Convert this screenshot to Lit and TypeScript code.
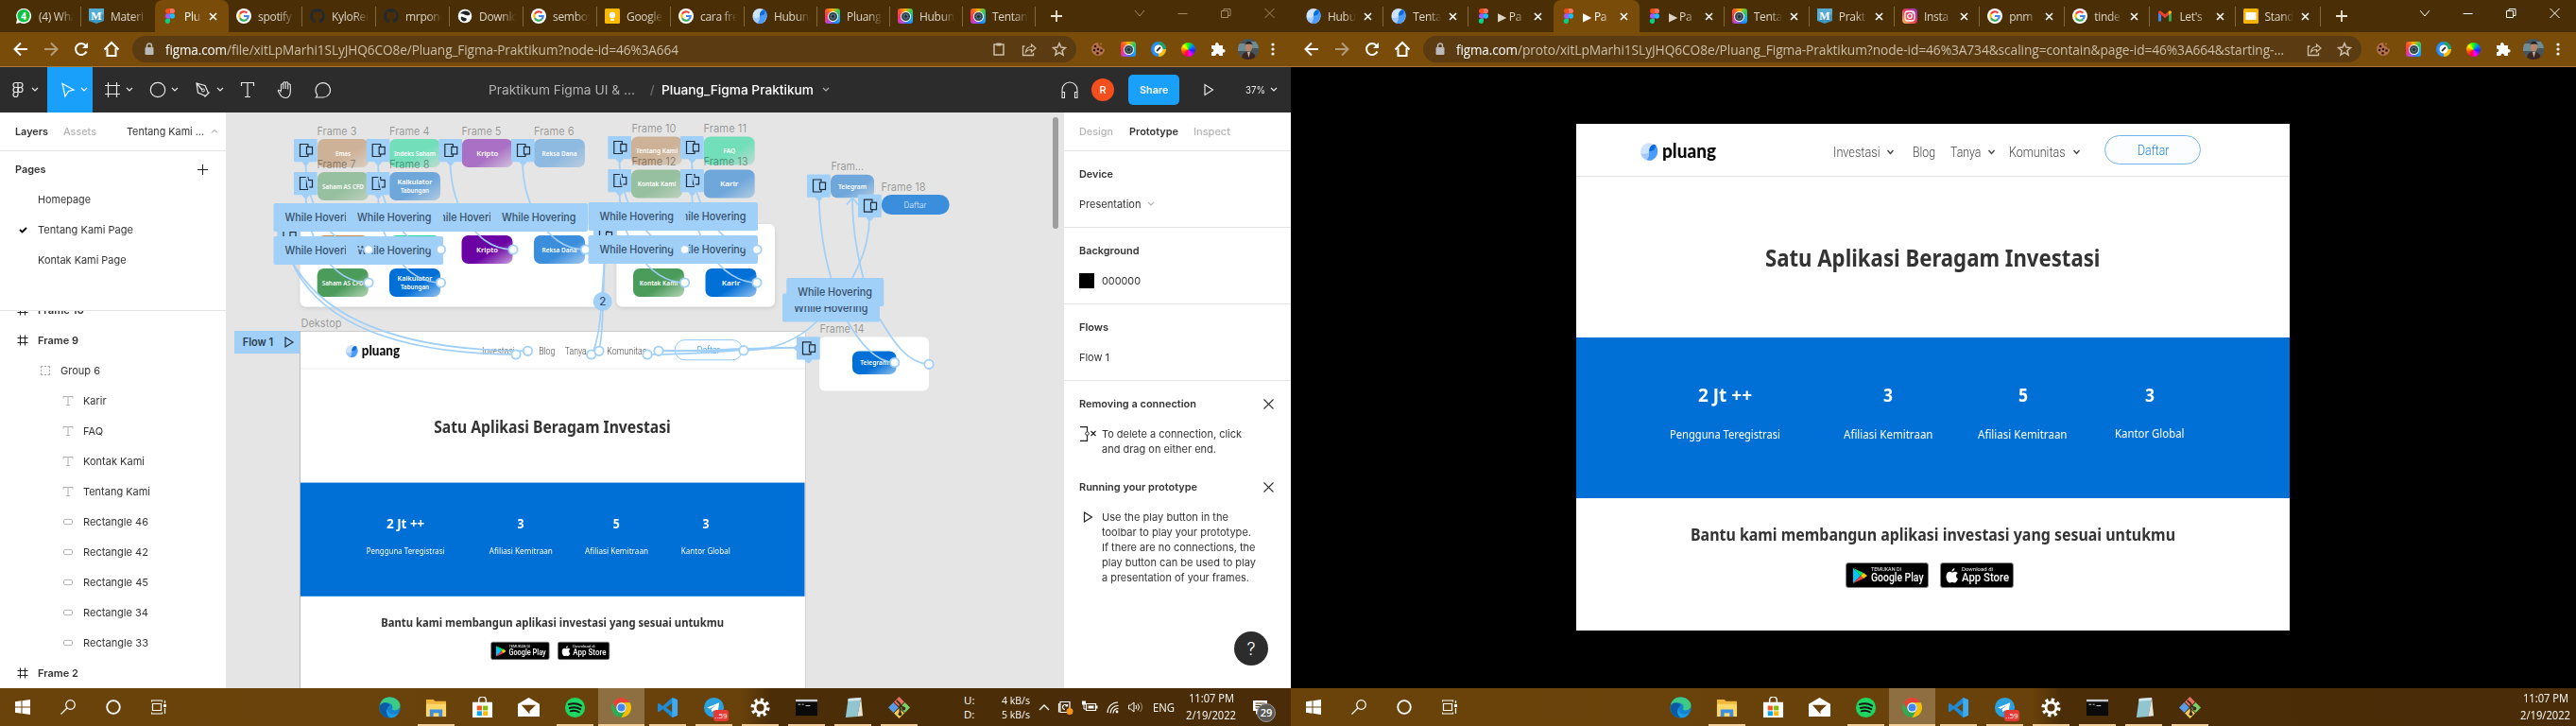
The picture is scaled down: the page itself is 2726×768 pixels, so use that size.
import { LitElement, html, svg, css, nothing } from "lit";
import { customElement, property } from "lit/decorators.js";
import { classMap } from "lit/directives/class-map.js";

/* ---------- text squeezed to a known width ---------- */
@customElement("fit-text")
class FitText extends LitElement {
  static styles = css`
    :host { display: inline-block; white-space: nowrap; }
    .t { display: inline-block; transform-origin: 0 50%; white-space: pre; }
  `;
  @property() t = "";
  @property({ type: Number }) w = 0;
  render() { return html`<span class="t">${this.t}</span>`; }
  updated() {
    const s = this.renderRoot.querySelector(".t") as HTMLElement;
    const n = s.getBoundingClientRect().width;
    const k = this.offsetWidth ? this.getBoundingClientRect().width / this.offsetWidth : 1;
    const nat = k > 0.9 && k < 1.1 ? n : s.offsetWidth;
    if (nat && this.w) {
      s.style.transform = `scaleX(${this.w / nat})`;
      this.style.width = `${this.w}px`;
    }
  }
}

const fit = (t: string, w: number, cls = "") => html`<fit-text class=${cls} .t=${t} .w=${w}></fit-text>`;
const ico = (w: number, h: number, vb: string, body: unknown) =>
  html`<svg width=${w} height=${h} viewBox=${vb} fill="none" style="display:block;flex:none">${body}</svg>`;

/* ---------- favicons and brand marks ---------- */
const fav: Record<string, () => unknown> = {
  whatsapp: () => ico(18, 18, "0 0 18 18", svg`<path d="M1 17l1-4.4A8 8 0 1 1 5.400 16z" fill="#fff"/><circle cx="9" cy="8.800" r="6.700" fill="#0fc143"/><text x="9" y="12.600" font-size="10" font-weight="700" text-anchor="middle" fill="#fff" font-family="Open Sans, sans-serif">4</text>`),
  materi: () => ico(16, 16, "0 0 16 16", svg`<path d="M0 0h16v13l-8 3-8-3z" fill="#3f97bd"/><path d="M0 0h16v6L0 13z" fill="#56abd0"/><text x="8" y="11.500" font-size="12" font-weight="700" text-anchor="middle" fill="#fff" font-family="Liberation Serif, serif">M</text>`),
  figma: () => ico(16, 16, "0 0 16 16", svg`<path d="M5.700 0H8v5.300H5.700a2.650 2.650 0 0 1 0-5.300z" fill="#f24e1e"/><path d="M8 0h2.300a2.650 2.650 0 0 1 0 5.300H8z" fill="#ff7262"/><path d="M5.700 5.300H8v5.400H5.700a2.700 2.700 0 0 1 0-5.400z" fill="#a259ff"/><circle cx="10.300" cy="8" r="2.700" fill="#1abcfe"/><path d="M5.700 10.700H8v2.600a2.650 2.650 0 1 1-2.300-2.600z" fill="#0acf83"/>`),
  google: () => ico(16, 16, "0 0 16 16", svg`<circle cx="8" cy="8" r="8" fill="#fff"/><g stroke-width="2.200"><path d="M3.900 5.700A4.700 4.700 0 0 1 11.400 4.700" stroke="#ea4335"/><path d="M3.900 5.700a4.700 4.700 0 0 0 0 4.600" stroke="#fbbc05"/><path d="M3.900 10.300a4.700 4.700 0 0 0 7.300 1.200" stroke="#34a853"/><path d="M8 8h4.700a4.700 4.700 0 0 1-1.500 3.500" stroke="#4285f4"/></g>`),
  github: () => ico(16, 16, "0 0 16 16", svg`<path fill="#24292e" d="M8 0C3.600 0 0 3.600 0 8c0 3.500 2.300 6.500 5.500 7.600.4.100.5-.2.500-.4v-1.400c-2.200.5-2.700-1-2.700-1-.4-.9-.9-1.200-.9-1.200-.7-.5.100-.5.100-.5.800.1 1.200.8 1.200.8.700 1.300 1.900.9 2.300.7.100-.5.300-.9.500-1.100-1.800-.2-3.600-.9-3.600-4 0-.9.300-1.600.8-2.100-.1-.2-.4-1 .1-2.100 0 0 .7-.2 2.200.8a7.500 7.500 0 0 1 4 0c1.500-1 2.200-.8 2.200-.8.4 1.100.2 1.900.1 2.100.5.600.8 1.300.8 2.100 0 3.100-1.900 3.700-3.700 3.900.3.300.6.800.6 1.500v2.200c0 .2.100.5.600.4A8 8 0 0 0 8 0z"/>`),
  globe: () => ico(16, 16, "0 0 16 16", svg`<circle cx="8" cy="8" r="7.300" fill="#fff"/><path d="M8.500 2.500c2.500 0 4.500 1.500 5 3.500-1 2-3 1-4.500 1s-2-1.200-3-1.200S3.500 5 3 5.500 5 2.500 8.500 2.500zM4 8.500c2 0 2.500 1.500 4.500 1.500s1.500 3.500-1 3.500S3 11 4 8.500z" fill="#222"/>`),
  keep: () => ico(16, 16, "0 0 16 16", svg`<rect width="16" height="16" rx="1.500" fill="#ffba00"/><circle cx="8" cy="7" r="3.200" fill="#fff"/><path d="M6.300 10.800h3.400v2H6.300z" fill="#fff"/>`),
  pluang: () => ico(16, 16, "0 0 18 18", svg`<ellipse cx="9" cy="9" rx="8.500" ry="9" fill="#cfe3fd"/><path d="M9 8.500c0-4 3-7.500 6.500-6.500 3 4 3 12-3.500 15.500-2 1-4.500.5-6-.5C9 15 8.500 12 9 8.500z" fill="#4b9bfa"/><path d="M9 8.500C9 4 11.500 1 15 1.800c1.500 3-1 7.200-6 6.700z" fill="#0a6bdc"/><path d="M.6 10.500C3 12 6.500 11.500 8.800 9 9 13 8 15 6 17 3 16 1 13.500.600 10.500z" fill="#a3c9fb"/>`),
  camera: () => html`<div class="cam">${ico(11, 11, "0 0 11 11", svg`<circle cx="5.500" cy="5.500" r="5.500" fill="#fff"/><circle cx="5.500" cy="5.500" r="4.600" fill="#37474f"/><circle cx="5.500" cy="5.500" r="2.200" fill="#22303a" stroke="#607d8b"/>`)}</div>`,
  insta: () => ico(16, 16, "0 0 16 16", svg`<defs><linearGradient id="ig" x1="0" y1="1" x2="1" y2="0"><stop offset="0" stop-color="#fdc04e"/><stop offset=".5" stop-color="#e93a5d"/><stop offset="1" stop-color="#8a3ac8"/></linearGradient></defs><rect width="16" height="16" rx="4" fill="url(#ig)"/><g stroke="#fff" stroke-width="1.300"><rect x="3" y="3" width="10" height="10" rx="3"/><circle cx="8" cy="8" r="2.300"/></g><circle cx="11" cy="5" r=".8" fill="#fff"/>`),
  gmail: () => ico(16, 16, "0 0 16 16", svg`<path d="M1 4v9.500h3V7z" fill="#4285f4"/><path d="M15 4v9.500h-3V7z" fill="#34a853"/><path d="M1 4.500C1 2.500 3 2 4 3l4 3.200L12 3c1-1 3-.5 3 1.500L8 10z" fill="#ea4335"/><path d="M12 3c1-1 3-.5 3 1.500L12 7z" fill="#fbbc04"/>`),
  slides: () => ico(16, 16, "0 0 16 16", svg`<rect width="16" height="16" rx="1.500" fill="#f5b400"/><rect x="2.500" y="4" width="11" height="8" fill="#fff"/>`),
};

interface Tab { i: string; t: string; active?: boolean; }

/* ---------- browser chrome ---------- */
@customElement("browser-chrome")
class BrowserChrome extends LitElement {
  @property({ attribute: false }) tabs: Tab[] = [];
  @property({ type: Number }) tabWidth = 78;
  @property({ type: Boolean }) closable = false;
  @property({ type: Boolean }) dim = false;
  @property() url = "";
  @property({ type: Number }) urlWidth = 0;
  static styles = css`
    :host { display: block; font-family: "Open Sans", "Noto Sans", sans-serif; color: #ddd6c8; }
    .strip { height: 34px; background: #4a2e06; display: flex; padding-left: 8px; box-sizing: border-box; }
    .tab { box-sizing: border-box; height: 34px; display: flex; align-items: center; padding-left: 8px; gap: 7px; border-right: 1px solid #85683a; border-image: linear-gradient(transparent 22%, #85683a 22%, #85683a 80%, transparent 80%) 1; flex: none; font-size: 12px; }
    .tab.edge { border-image: none; border-color: transparent; }
    .tab.active { background: #7a4c0a; border-radius: 8px 8px 0 0; border-image: none; border-color: transparent; color: #fff; }
    .name { flex: 1; min-width: 0; overflow: hidden; white-space: nowrap; -webkit-mask-image: linear-gradient(90deg, #000 60%, transparent); mask-image: linear-gradient(90deg, #000 60%, transparent); margin-right: 7px; letter-spacing: -0.3px; }
    .closing .name { margin-right: 1px; }
    .x { margin-right: 11px; color: #fff; }
    .cam { width: 16px; height: 16px; border-radius: 3px; background: conic-gradient(#ffb300, #35c85a, #16b5e0, #1e88ff, #b04ae0, #ff3060, #ff5030, #ffb300); display: grid; place-items: center; flex: none; }
    .plus { display: flex; align-items: center; padding-left: 16px; color: #eee4d2; }
    .spacer { flex: 1; }
    .ctl { display: flex; align-items: center; gap: 33px; padding: 0 16px 6px 0; color: #fff; }
    .ctl.dim { color: #a18a66; }
    .bar { height: 36px; background: #7a4c0a; display: flex; align-items: center; padding-left: 12px; gap: 12px; color: #fff; }
    .fade { opacity: .45; }
    .omni { flex: 1; height: 28px; border-radius: 14px; background: #5b3c12; display: flex; align-items: center; padding: 0 10px 0 12px; gap: 16px; color: #cbbfa9; font-size: 14px; }
    .url { flex: 1; overflow: hidden; margin-left: -5px; letter-spacing: -.1px; }
    .wh { color: #fff; }
    .exts { display: flex; align-items: center; gap: 16px; padding: 0 17px 0 3px; }
    .wheel { width: 15px; height: 15px; border-radius: 50%; background: conic-gradient(#0f0, #08f, #22f, #f0f, #f04, #f60, #ff0, #0f0); }
    .me { width: 22px; height: 22px; border-radius: 50%; overflow: hidden; margin: 0 -3px; }
    .line { height: 1px; background: #a8783a; }
  `;
  render() {
    const act = this.tabs.findIndex((t) => t.active);
    const x = ico(9, 9, "0 0 9 9", svg`<path d="M1 1l7 7M8 1L1 8" stroke="currentColor" stroke-width="1.600"/>`);
    const host = this.url.slice(0, 9);
    const rest = this.url.slice(9);
    return html`
      <div class="strip">
        ${this.tabs.map((t, i) => {
          const w = this.closable ? this.tabWidth : i < 10 ? 78 : 77;
          const close = this.closable || t.active;
          return html`<div class=${classMap({ tab: true, active: !!t.active, edge: i === act - 1, closing: !!close })} style="width:${w}px">
            ${fav[t.i]()}<span class="name">${t.t}</span>${close ? html`<span class="x">${x}</span>` : nothing}</div>`;
        })}
        <div class="plus">${ico(12, 12, "0 0 12 12", svg`<path d="M6 0v12M0 6h12" stroke="currentColor" stroke-width="1.800"/>`)}</div>
        <div class="spacer"></div>
        <div class=${classMap({ ctl: true, dim: this.dim })}>
          ${ico(12, 8, "0 0 12 8", svg`<path d="M1 1l5 6 5-6" stroke="currentColor"/>`)}
          ${ico(13, 10, "0 0 13 10", svg`<path d="M1.500 5.500h10" stroke="currentColor"/>`)}
          ${ico(13, 12, "0 0 13 12", svg`<path d="M1.500 3.500h7v7h-7zM4 3.500v-2h7v7H8.500" stroke="currentColor"/>`)}
          ${ico(13, 12, "0 0 13 12", svg`<path d="M1.500 1l10 10M11.500 1l-10 10" stroke="currentColor"/>`)}
        </div>
      </div>
      <div class="bar">
        ${ico(20, 20, "0 0 20 20", svg`<path d="M17 10H4M10 3.500L3.500 10l6.500 6.500" stroke="currentColor" stroke-width="2"/>`)}
        <span class="fade">${ico(20, 20, "0 0 20 20", svg`<path d="M3 10h13M10 3.500l6.500 6.500-6.500 6.500" stroke="currentColor" stroke-width="2"/>`)}</span>
        ${ico(20, 20, "0 0 20 20", svg`<path d="M15.500 12.500a6 6 0 1 1-.8-6.300" stroke="currentColor" stroke-width="2"/><path d="M17 3v6h-6z" fill="currentColor"/>`)}
        ${ico(20, 20, "0 0 20 20", svg`<path d="M5.500 9v8h9V9M2.500 10.500L10 3l7.500 7.500" stroke="currentColor" stroke-width="2"/>`)}
        <div class="omni">
          ${ico(12, 14, "0 0 12 14", svg`<rect x="1.500" y="5" width="9" height="8" rx="1" fill="#b9b9b9"/><path d="M3.500 6V3.500a2.500 2.500 0 0 1 5 0V6" stroke="#b9b9b9" stroke-width="1.500"/>`)}
          <span class="url">${fit(host, 65, "wh")}${fit(rest, this.urlWidth - 65)}</span>
          ${this.dim ? ico(16, 16, "0 0 16 16", svg`<path d="M3 3h10v11H3z" stroke="currentColor" stroke-width="1.500"/><path d="M5.500 1.500h5v3h-5z" fill="currentColor"/>`) : nothing}
          ${ico(16, 16, "0 0 16 16", svg`<path d="M3.500 5H1.500v9.500h11V12" stroke="currentColor" stroke-width="1.300"/><path d="M4.500 11c.5-4 3-5.500 6-5.500V3l4.500 4-4.500 4V8.500c-2.500 0-4.500.5-6 2.500z" stroke="currentColor" stroke-width="1.200"/>`)}
          ${ico(16, 16, "0 0 16 16", svg`<path d="M8 1.800l1.900 4.300 4.600.4-3.500 3 1.100 4.600L8 11.700l-4.100 2.400L5 9.500l-3.500-3 4.600-.4z" stroke="currentColor" stroke-width="1.500"/>`)}
        </div>
        <div class="exts">
          ${ico(16, 16, "0 0 16 16", svg`<path d="M8 1a7 7 0 1 0 7 7c-2 0-3-1-3-2.500C10 6 8 4 8 1z" fill="#b5714e"/><circle cx="11" cy="2.500" r="1" fill="#b5714e"/><g fill="#2c1508"><circle cx="5" cy="5" r="1.300"/><circle cx="4" cy="9" r="1.300"/><circle cx="8" cy="8" r="1.300"/><circle cx="11.500" cy="9.500" r="1.300"/><circle cx="7.500" cy="12.300" r="1.300"/></g>`)}
          ${fav.camera()}
          ${ico(16, 16, "0 0 16 16", svg`<circle cx="8" cy="8" r="6" stroke="#2b8cf0" stroke-width="4" fill="#fff"/><path d="M8 2a6 6 0 0 1 6 6" stroke="#1ea362" stroke-width="4"/><path d="M14 8a6 6 0 0 1-6 6" stroke="#fbbc05" stroke-width="4"/><circle cx="8" cy="8" r="4.500" fill="#fff"/><path d="M6 10l4-4" stroke="#333" stroke-width="1.800"/>`)}
          <div class="wheel"></div>
          ${ico(16, 16, "0 0 16 16", svg`<path d="M1 4h4c-.6-4 4.300-4 3.700 0H13v4c3.500-.5 3.500 4 0 3.600V15H9c.5-3-4-3-3.500 0H1v-4c3 .3 3-4 0-3.500z" fill="#fff"/>`)}
          <div class="me">${ico(22, 22, "0 0 22 22", svg`<rect width="22" height="22" fill="#46555c"/><path d="M0 5h9v8H0zM14 3h8v7h-8z" fill="#6f8b94"/><ellipse cx="11.500" cy="9" rx="3.500" ry="4.500" fill="#b98566"/><path d="M7.500 7c0-5 8-5 8 0l-1-1.500h-6z" fill="#17120f"/><path d="M4 22c0-7 3-8 7-8s7.500 1 8 8z" fill="#3b2522"/><path d="M10 14h3l-1.500 6z" fill="#c9b8a6"/>`)}</div>
          ${ico(4, 16, "0 0 4 16", svg`<g fill="#fff"><circle cx="2" cy="3" r="1.600"/><circle cx="2" cy="8" r="1.600"/><circle cx="2" cy="13" r="1.600"/></g>`)}
        </div>
      </div>
      <div class="line"></div>`;
  }
}

/* ---------- windows taskbar ---------- */
const apps: { n: string; run?: boolean; g: unknown }[] = [
  { n: "edge", g: svg`<circle cx="12" cy="12" r="11.500" fill="#1583cf"/><path d="M1 10C2 3 7 .5 12 .5c7 0 11.500 5 11.500 9 0 4-3 5.500-6 5.500s-3-1.500-2.500-2.500C16 9 12 6 8 7c-3 .5-6 2-7 3z" fill="#3ccb86"/><path d="M1 10c2-4 9-5 11 0-4 1-5 9 1 12.500C5 25 0 17 1 10z" fill="#0c59a4"/><path d="M9.500 13c0 6 6 8 12 5-3 5-7 5.500-9 5-4-1.500-5-7-3-10z" fill="#1b9de2"/>` },
  { n: "files", run: true, g: svg`<path d="M1 3h8l2 2h12v17H1z" fill="#f0b73a"/><path d="M1 8h22v14H1z" fill="#ffd869"/><path d="M5 22v-8h14v8h-4v-4H9v4z" fill="#3f8fe0"/>` },
  { n: "store", g: svg`<path d="M8 7V4a4 4 0 0 1 8 0v3" stroke="#fff" stroke-width="1.500"/><path d="M1 6h22v17H1z" fill="#fff"/><path d="M6 10h5.400v5H6z" fill="#f35325"/><path d="M12.600 10H18v5h-5.400z" fill="#81bc06"/><path d="M6 16h5.400v5H6z" fill="#05a6f0"/><path d="M12.600 16H18v5h-5.400z" fill="#ffba08"/>` },
  { n: "mail", g: svg`<path d="M0 8l12-7 12 7v14H0z" fill="#fff"/><path d="M4 9h16l-7 7v3l-3-3z" fill="#6a430b"/>` },
  { n: "spotify", run: true, g: svg`<circle cx="12" cy="12" r="11" fill="#1ed760"/><path d="M5 8.500c5-1.500 10-1 14 1.500M6 12.500c4-1.200 8.500-.8 12 1.200M7 16c3.500-1 6.500-.6 9.500 1" stroke="#191414" stroke-width="2" stroke-linecap="round"/>` },
  { n: "chrome", run: true, g: svg`<circle cx="12" cy="12" r="11" fill="#34a853"/><path d="M2.500 6.500A11 11 0 0 1 21.500 6.500H12A5.500 5.500 0 0 0 7 14.500z" fill="#ea4335"/><path d="M21.500 6.500A11 11 0 0 1 12 23l4.800-8.200A5.500 5.500 0 0 0 12 6.500z" fill="#fbbc05"/><circle cx="12" cy="12" r="5.400" fill="#fff"/><circle cx="12" cy="12" r="4.200" fill="#4285f4"/>` },
  { n: "code", run: true, g: svg`<path d="M17 1l6 2.500v17L17 23 6.500 13.500 2.500 17 1 16v-8l1.500-1L6.500 10.500zM17 7l-6.500 5L17 17z" fill="#1f8ad2" fill-rule="evenodd"/><path d="M17 1l6 2.500v17L17 23z" fill="#3cabf0"/>` },
  { n: "telegram", run: true, g: svg`<circle cx="12" cy="12" r="11" fill="#2ba2de"/><path d="M4.500 12L18 6.500 16 18l-4.500-3-2 2-.5-3.500L15 9l-7.500 4.300z" fill="#fff"/>` },
  { n: "settings", run: true, g: svg`<circle cx="12" cy="12" r="5.700" stroke="#fff" stroke-width="3"/><circle cx="12" cy="12" r="8.700" stroke="#fff" stroke-width="3.600" stroke-dasharray="3.400 3.433"/>` },
  { n: "cmd", run: true, g: svg`<path d="M0 3h24v18H0z" fill="#0a0a0a"/><path d="M0 3h24v2.500H0z" fill="#c9c9c9"/><path d="M2.500 8.500h3M7 8.500h2M11 10h5" stroke="#ddd"/>` },
  { n: "notepad", run: true, g: svg`<path d="M7 2l14-1-4 21-13 1z" fill="#8fc6cf"/><path d="M7 2l14-1-.6 3-14 1z" fill="#d8e7ea"/><path d="M21 1l2 20-6 1z" fill="#e7e3d6"/>` },
  { n: "git", run: true, g: svg`<g transform="rotate(45 12 12)"><path d="M3.500 3.500h8v8h-8z" fill="#e2705e"/><path d="M12.500 3.500h8v8h-8z" fill="#7ccf62"/><path d="M3.500 12.500h8v8h-8z" fill="#5a9ae6"/><path d="M12.500 12.500h8v8h-8z" fill="#f2cf5b"/></g><path d="M9 4l4 4v11M13 9l4 4" stroke="#3b2a1c" stroke-width="1.800"/><circle cx="13" cy="19" r="2" fill="#3b2a1c"/><circle cx="17" cy="13" r="2" fill="#3b2a1c"/>` },
];

@customElement("task-bar")
class TaskBar extends LitElement {
  @property({ type: Boolean }) tray = false;
  static styles = css`
    :host { display: block; font-family: "Open Sans", "Noto Sans", sans-serif; font-size: 12px; color: #fff; }
    .bar { height: 40px; display: flex; align-items: stretch; background: linear-gradient(90deg, #6a430b 0, #69410a 785px, #4b2e08 815px, #4a2d08 100%); }
    .sys { display: flex; width: 388px; }
    .cell { width: 48px; display: grid; place-items: center; }
    .app { width: 49px; display: grid; place-items: center; position: relative; box-sizing: border-box; }
    .app.run::after { content: ""; position: absolute; bottom: 0; left: 5px; right: 5px; height: 2px; background: #f3cf9a; }
    .app.chrome { background: #8d6f42; }
    .app.chrome::after { left: 0; right: 0; }
    .badge { position: absolute; right: 9px; bottom: 5px; width: 16px; height: 12px; border-radius: 3px; background: #e53935; font-size: 8px; line-height: 11px; text-align: center; }
    .gap { flex: 1; }
    .tray { display: flex; align-items: center; width: 346px; box-sizing: border-box; }
    .two { display: flex; flex-direction: column; align-items: center; line-height: 15px; font-size: 11.5px; }
    .clock { line-height: 18px; font-size: 12px; }
    .net { margin-right: 9px; }
    .u { width: 40px; align-items: flex-start; }
    .icons { display: flex; gap: 7px; align-items: center; margin-right: 10px; }
    .note { position: relative; margin-left: 17px; }
    .num { position: absolute; left: 5px; top: 4px; width: 20px; height: 20px; border-radius: 50%; background: #5d5a55; border: 1px solid #999; box-sizing: border-box; font-size: 11px; font-weight: 600; line-height: 18px; text-align: center; }
    .end { padding: 0 6px 0 0; display: flex; align-items: center; }
  `;
  render() {
    const clock = html`<div class="two clock">${fit("11:07 PM", 48)}${fit("2/19/2022", 53)}</div>`;
    return html`<div class="bar">
      <div class="sys">
        <div class="cell">${ico(16, 16, "0 0 16 16", svg`<path d="M0 2.300L6.500 1.300V7.500H0zM7.500 1.200L16 0v7.500H7.500zM0 8.500h6.500v6.200L0 13.700zM7.500 8.500H16V16l-8.500-1.200z" fill="#fff"/>`)}</div>
        <div class="cell">${ico(16, 16, "0 0 16 16", svg`<circle cx="10.500" cy="5.500" r="4.800" stroke="#fff" stroke-width="1.200"/><path d="M7 9L.5 15.500" stroke="#fff" stroke-width="1.200"/>`)}</div>
        <div class="cell">${ico(16, 16, "0 0 16 16", svg`<circle cx="8" cy="8" r="6.800" stroke="#fff" stroke-width="1.800"/>`)}</div>
        <div class="cell">${ico(17, 16, "0 0 17 16", svg`<path d="M1.500 4.500h9v7h-9zM.5 2.500V1h11v1.500M.5 13.500V15h11v-1.500M14.500 1v3M14.500 9v6" stroke="#fff" stroke-width="1.200"/><path d="M13 5h3v3h-3z" fill="#fff"/>`)}</div>
      </div>
      ${apps.map((a) => html`<div class=${classMap({ app: true, run: !!a.run, [a.n]: true })}>${ico(23, 23, "0 0 24 24", a.g)}${a.n === "telegram" ? html`<span class="badge">..59</span>` : nothing}</div>`)}
      <div class="gap"></div>
      ${this.tray ? html`<div class="tray">
        <div class="two u"><span>U:</span><span>D:</span></div>
        <div class="two net">${fit("4 kB/s", 30)}${fit("5 kB/s", 30)}</div>
        <div class="icons">
          ${ico(12, 8, "0 0 12 8", svg`<path d="M1 7l5-5 5 5" stroke="#fff" stroke-width="1.300"/>`)}
          ${ico(19, 18, "0 0 19 18", svg`<path d="M4 3.500h10v11H4zM2.500 14.500V5M9 11.500a2.500 2.500 0 1 1 2-4M9.500 8l2 0 0-2" stroke="#fff" stroke-width="1.200"/><circle cx="14" cy="13.500" r="3.500" fill="#f7941d"/>`)}
          ${ico(18, 16, "0 0 18 16", svg`<path d="M5.500 4.500h10v7h-10z" stroke="#fff" stroke-width="1.200"/><path d="M7.500 6.500h6v3h-6zM16 6.500h1.500v3H16zM1 1.500h4v4H1z" fill="#fff"/><path d="M3 5v5h2" stroke="#fff"/>`)}
          ${ico(17, 16, "0 0 17 16", svg`<path d="M3 14A11 11 0 0 1 14 3M6 14.500a8 8 0 0 1 8.500-8M9 14.500a5 5 0 0 1 5.500-5" stroke="#fff" stroke-width="1.100"/><circle cx="13" cy="13" r="1.400" fill="#fff"/>`)}
          ${ico(17, 16, "0 0 17 16", svg`<path d="M1.500 6h2L7 3v10L3.500 10h-2z" stroke="#fff"/><path d="M9 6q1.500 2 0 4M11 4.500q3 3.500 0 7" stroke="#fff"/><path d="M13.500 3q4 5 0 10" stroke="#a89878"/>`)}
        </div>
        ${fit("ENG", 23)}<span style="width:12px"></span>
        ${clock}
        <div class="note">${ico(17, 17, "0 0 17 17", svg`<path d="M1 1h15v11H8l-4 4v-4H1z" fill="#fff"/><path d="M3.500 4h10M3.500 6.500h10M3.500 9h6" stroke="#4a2d08"/>`)}<span class="num">29</span></div>
      </div>` : html`<div class="end">${clock}</div>`}
    </div>`;
  }
}

/* ---------- pluang landing page ---------- */
@customElement("pluang-page")
class PluangPage extends LitElement {
  @property({ type: Boolean }) editing = false;
  static styles = css`
    :host { display: block; width: 755px; height: 536px; background: #fff; overflow: hidden; font-family: "Noto Sans", "Open Sans", sans-serif; color: #333; }
    .head { height: 56px; box-sizing: border-box; border-bottom: 1px solid #e3e3e3; display: flex; align-items: center; padding: 4px 93px 0 68px; font-family: Roboto, sans-serif; font-weight: 300; font-size: 15.500px; color: #444; }
    .brand { display: flex; align-items: center; gap: 5px; width: 204.400px; font-family: Lato, sans-serif; font-weight: 900; font-size: 20px; color: #0a0a0a; line-height: 20px; }
    .word { margin-top: -3px; }
    .link { display: flex; align-items: center; gap: 7px; }
    .l1 { width: 84.600px; } .l2 { width: 39.400px; } .l3 { width: 62.300px; } .l4 { width: 101px; }
    .pill { width: 102.300px; height: 31px; border: 1px solid #73b4f0; border-radius: 16px; box-sizing: border-box; display: grid; place-items: center; background: #fbfdff; color: #1a86e0; margin-top: -4px; }
    .hero { height: 170px; display: grid; place-items: center; font-weight: 700; font-size: 25px; box-sizing: border-box; padding-bottom: 1px; }
    .stats { height: 170px; background: #006fd6; color: #fff; display: flex; padding-left: 99px; box-sizing: border-box; align-items: flex-start; }
    .stat { display: flex; flex-direction: column; align-items: center; padding-top: 48px; font-size: 12.500px; line-height: 17px; flex: none; }
    .num { font-weight: 700; font-size: 19px; line-height: 26px; margin-bottom: 20px; }
    .up { margin-bottom: 19px; }
    .cta { height: 68px; display: grid; place-items: center; font-weight: 700; font-size: 18.500px; box-sizing: border-box; padding-top: 7px; }
    .stores { display: flex; gap: 12px; padding-left: 285px; font-family: Roboto, sans-serif; color: #fff; }
    .store { height: 27px; box-sizing: border-box; border-radius: 3px; background: #000; border: .5px solid #888; display: flex; align-items: center; gap: 4px; padding-left: 6px; }
    .g { width: 88px; } .a { width: 78px; padding-left: 5px; }
    .lines { display: flex; flex-direction: column; }
    .s { font-size: 5.800px; line-height: 6px; } .b { font-size: 12px; font-weight: 500; line-height: 13px; }
  `;
  render() {
    const chev = this.editing ? nothing : ico(9, 6, "0 0 9 6", svg`<path d="M1.500 1l3 3.500 3-3.500" stroke="#444" stroke-width="1.400"/>`);
    const stats: [string, number, string, number, number][] = [["2 Jt ++", 57, "Pengguna Teregistrasi", 117, 67.2], ["3", 10, "Afiliasi Kemitraan", 94.5, 48.200], ["5", 10, "Afiliasi Kemitraan", 94.5, 50], ["3", 10, "Kantor Global", 73.5, 0]];
    return html`
      <div class="head">
        <div class="brand">${ico(18.5, 19, "0 0 18 18", svg`<ellipse cx="9" cy="9" rx="9" ry="9" fill="#cfe3fd"/><path d="M9 8.500c0-4 3-8 6.500-6.500 3.500 4 3 12-3.500 15.500-2 1-4.500.5-6-.5C9 15 8.500 12 9 8.500z" fill="#4b9bfa"/><path d="M9 8.500C9 4 11.500 1 15 1.800c1.500 3-1 7.200-6 6.700z" fill="#0a6bdc"/><path d="M.300 10.500C3 12 6.500 11.500 8.800 9 9 13 8 15 6 17.500 3 16.500 1 13.500.300 10.500z" fill="#a3c9fb"/>`)}${fit("pluang", 57, "word")}</div>
        <div class="link l1">${fit("Investasi", 49.5)}${chev}</div>
        <div class="link l2">${fit("Blog", 24)}</div>
        <div class="link l3">${fit("Tanya", 32.5)}${chev}</div>
        <div class="link l4">${fit("Komunitas", 59.5)}${chev}</div>
        <div class="pill">${fit("Daftar", 33.5)}</div>
      </div>
      <div class="hero">${fit("Satu Aplikasi Beragam Investasi", 354.5)}</div>
      <div class="stats">${stats.map(([n, nw, l, w, g], i) => html`<div class="stat" style="margin-right:${g}px">${fit(n, nw, i === 3 ? "num up" : "num")}${fit(l, w)}</div>`)}</div>
      <div class="cta">${fit("Bantu kami membangun aplikasi investasi yang sesuai untukmu", 513)}</div>
      <div class="stores">
        <div class="store g">${ico(16, 18, "0 0 16 18", svg`<path d="M1 1v16l8-8z" fill="#00c8ff"/><path d="M1 1l8 8 3-3z" fill="#00e676"/><path d="M1 17l8-8 3 3z" fill="#ff3a44"/><path d="M12 6l4 3-4 3-3-3z" fill="#ffca00"/>`)}<div class="lines">${fit("TEMUKAN DI", 32, "s")}${fit("Google Play", 55.5, "b")}</div></div>
        <div class="store a">${ico(13, 16, "0 0 13 16", svg`<path d="M9.500 0c0 2-1.500 3.500-3 3.500C6.300 1.800 8 .2 9.500 0zM6.500 4.500C7.500 4.500 8.500 3.700 10 3.700c1 0 2 .5 2.700 1.500-2.500 1.600-2 5 .3 5.900C12.300 13 11 15.500 9.500 15.500c-1 0-1.500-.6-2.700-.6s-1.800.6-2.600.6C2.500 15.500.5 12 .5 9c0-3.500 2-5.200 3.700-5.200 1 0 1.700.7 2.300.7z" fill="#fff"/>`)}<div class="lines">${fit("Download di", 33, "s")}${fit("App Store", 50, "b")}</div></div>
      </div>`;
  }
}

/* ---------- prototype canvas ---------- */
const BLUE = "#a0cff8";
const box = (x: number, y: number) => svg`<g><path d="M${x + 8} ${y + 23}q4.500 10 9 0z" fill=${BLUE}/><rect x=${x} y=${y} width="24.700" height="24.300" fill=${BLUE} rx="1"/><path d="M${x + 15} ${y + 8}v-2.500h-8.500v13h8.500v-2.500" stroke="#1f2c38" stroke-width="1.200"/><rect x=${x + 13.5} y=${y + 8.500} width="6" height="7.500" stroke="#1f2c38" stroke-width="1.200"/></g>`;
const lab = (t: string, x: number, y: number, w: number) => svg`<text x=${x} y=${y + 4} font-size="11.200" fill="#000" fill-opacity=".36" textLength=${w} lengthAdjust="spacingAndGlyphs">${t}</text>`;
const hover = (x: number, y: number) => svg`<rect x=${x} y=${y} width="103" height="30" rx="2" fill=${BLUE}/><text x=${x + 12} y=${y + 19} font-size="11.600" font-weight="500" fill="#35506a" textLength="78.500" lengthAdjust="spacingAndGlyphs">While Hovering</text>`;
const dot = (x: number, y: number) => svg`<circle cx=${x} cy=${y} r="4.700" fill="#fff" stroke=${BLUE} stroke-width="1.800"/>`;
const curve = (x: number, y: number, ex: number, ey: number) => svg`<path d="M${x} ${y}C${x + 0.5} ${y + 49} ${ex - 38} ${ey} ${ex} ${ey}" stroke=${BLUE} stroke-width="1.700"/>`;
const card = (t: string, x: number, y: number, f: string, w = 54, h = 30) => {
  const l = t.split("|");
  return svg`<rect x=${x} y=${y} width=${w} height=${h} rx="7" fill="url(#${f})"/>${l.map((s, i) => svg`<text x=${x + w / 2} y=${y + h / 2 + 2.700 + (i - (l.length - 1) / 2) * 9.500} text-anchor="middle" font-size="7.200" font-weight="600" fill="#fff" font-family="Noto Sans, sans-serif" textLength=${s.length * 3.5 + 2} lengthAdjust="spacingAndGlyphs">${s}</text>`)}`;
};
const grads: [string, string, string][] = [["emas", "#cdb297", "#d9d0c6"], ["idx", "#72dfba", "#c0dcd2"], ["kr", "#a970c6", "#d3c4dc"], ["rd", "#8eb9e0", "#bccede"], ["sa", "#97c0a0", "#bdd0be"], ["ka", "#6fa7db", "#b2cce2"], ["kr2", "#6b02a3", "#c79fdc"], ["rd2", "#3b8edc", "#a3caf0"], ["sa2", "#4b9b5b", "#b4d6b8"], ["ka2", "#006fd6", "#95c2f0"], ["em2", "#c58a4d", "#ddc2a6"], ["ix2", "#1ed79a", "#a0e8d0"]];

@customElement("proto-canvas")
class ProtoCanvas extends LitElement {
  static styles = css`
    :host { display: block; position: relative; overflow: hidden; background: #e5e5e5; flex: 1; }
    .desk { position: absolute; left: 77px; top: 231px; border: 1.4px solid #aaa; border-left-color: #777; border-top-color: #999; transform: scale(.7073); transform-origin: 0 0; height: 600px; background: #fff; }
    .over { position: absolute; left: 0; top: 0; display: block; font-family: Inter, sans-serif; }
  `;
  render() {
    const r1 = [323.5, 400, 476.5, 553];
    return html`<div class="desk"><pluang-page editing></pluang-page></div>
    <svg class="over" width="886" height="609" viewBox="240 119 886 609" fill="none">
      <defs>${grads.map(([id, a, b]) => svg`<linearGradient id=${id} x1=".1" y1=".2" x2="1" y2="1"><stop offset=".5" stop-color=${a}/><stop offset="1" stop-color=${b}/></linearGradient>`)}
        <filter id="sh" x="-10%" y="-10%" width="120%" height="130%"><feDropShadow dx="0" dy="1.500" stdDeviation="2" flood-opacity=".12"/></filter></defs>
      <rect x="317.500" y="237" width="320.500" height="87.500" rx="6" fill="#fff" filter="url(#sh)"/>
      <rect x="652.500" y="237" width="167.500" height="87.500" rx="6" fill="#fff" filter="url(#sh)"/>
      <rect x="867" y="356.500" width="116" height="57" rx="6" fill="#fff"/>
      ${card("Emas", 336, 147, "emas")}${card("Indeks Saham", 412, 147, "idx")}${card("Kripto", 488.700, 147, "kr")}${card("Reksa Dana", 565, 147, "rd")}
      ${card("Saham AS CFD", 336, 182, "sa")}${card("Kalkulator|Tabungan", 412, 182, "ka")}
      ${card("Tentang Kami", 668, 144.500, "emas")}${card("FAQ", 744.700, 144.500, "idx")}${card("Kontak Kami", 668, 179.500, "sa")}${card("Karir", 744.700, 179.500, "ka")}
      ${card("Telegram", 879, 184.700, "ka", 46, 24.500)}
      <rect x="932.700" y="206" width="72" height="21" rx="10.500" fill="#3b8edc"/><text x="968.500" y="220" text-anchor="middle" font-size="8.800" font-weight="300" fill="#e4f1ff" font-family="Roboto, sans-serif">Daftar</text>
      ${lab("Frame 3", 335.5, 139, 42)}${lab("Frame 4", 412, 139, 42.5)}${lab("Frame 5", 488.500, 139, 42)}${lab("Frame 6", 565, 139, 42.5)}
      ${lab("Frame 7", 335.5, 174, 41)}${lab("Frame 8", 412, 174, 42.5)}
      ${lab("Frame 10", 668.5, 136, 47)}${lab("Frame 11", 744.5, 136, 45.5)}${lab("Frame 12", 668.5, 171, 47)}${lab("Frame 13", 744.5, 171, 47)}
      ${lab("Fram...", 879.5, 176, 34.500)}${lab("Frame 18", 932.500, 198, 47)}${lab("Frame 14", 867.500, 348, 47)}${lab("Dekstop", 318.5, 342, 43)}
      ${card("Emas", 336, 249, "em2")}${card("Indeks Saham", 412, 249, "ix2")}${card("Kripto", 488.500, 249, "kr2")}${card("Reksa Dana", 565, 249, "rd2")}
      ${card("Saham AS CFD", 335.700, 284, "sa2")}${card("Kalkulator|Tabungan", 412, 284, "ka2")}
      ${card("Kontak Kami", 670, 284, "sa2")}${card("Karir", 746.500, 284, "ka2")}${card("Telegram", 902, 371.500, "ka2", 46.500, 24.500)}
      <g stroke=${BLUE} stroke-width="1.700">
        <path d="M308 275C338 330 410 371 558 371.300"/><path d="M308 275C330 328 395 374 546 375"/>
        <path d="M639.500 279L638 319Q638 350 634 371.300M639.500 279L636.500 319Q634 362 625.700 375"/>
        <path d="M697 371.500C740 371.500 790 368 845 367.700M697 370.500Q745 372 787 370.500M685 375C760 375 780 368 845 368"/>
        <path d="M866.700 208C867 235 872 270 879.500 294"/><path d="M913.500 294C905 262 902 235 902 209M896 216.500l6-7.500 6 7.500"/><path d="M920 230C920 255 912 275 902 294"/>
        <path d="M864.500 340C840 364 812 370.700 787 370.700"/><path d="M896.700 340C910 362 926 383 946.700 383.500"/><path d="M930.700 337C943 357 958 384 983 385.300"/>
      </g>
      ${box(293.500, 237)}${box(628, 237)}
      ${[323.5, 400].map((x) => curve(x, 206, x + 66.500, 299))}${[655.5, 732].map((x) => curve(x, 203, x + 69, 299))}
      ${box(311, 182)}${box(387.700, 182)}${box(643.300, 179)}${box(720, 179)}
      ${hover(289.500, 250)}${hover(366, 250)}${hover(699, 249)}${hover(622.500, 249)}
      ${r1.map((x) => curve(x, 171, x + 66.500, 264))}${[655.5, 732].map((x) => curve(x, 168, x + 69, 264))}
      ${box(311, 147)}${box(387.700, 147)}${box(464.300, 147)}${box(541, 147)}${box(643.300, 144)}${box(720, 144)}${box(854, 184.500)}${box(908, 205.700)}
      <path d="M844 364l-5 4 5 4z" fill=${BLUE}/>${box(843, 356.300)}
      ${hover(289.500, 215)}${hover(442.500, 215)}${hover(366, 215)}${hover(519, 215)}${hover(699, 214)}${hover(622.500, 214)}
      ${hover(828, 310.500)}${hover(832.300, 294)}
      ${[[390, 264], [466.5, 264], [543, 264], [619.5, 264], [390, 299], [466.5, 299], [724.5, 264], [801, 264], [724.5, 299], [801, 299], [946.7, 383.5], [983, 385.3], [546, 375], [558.5, 371.3], [625.7, 375], [634, 371.3], [685, 375], [697, 371.3], [787, 370.7]].map(([x, y]) => dot(x, y))}
      <circle cx="637.700" cy="319" r="10" fill=${BLUE}/><text x="637.700" y="323" font-size="11.500" font-weight="500" text-anchor="middle" fill="#35506a">2</text>
      <rect x="248" y="350" width="69.500" height="24" fill=${BLUE}/><text x="256.700" y="366" font-size="11.500" font-weight="600" fill="#2a3f52" textLength="32.500" lengthAdjust="spacingAndGlyphs">Flow 1</text><path d="M302 357v10l8-5z" stroke="#1f2c38" stroke-width="1.200"/>
      <rect x="1114" y="124" width="6" height="118" rx="3" fill="#9e9e9e"/>
    </svg>`;
  }
}

/* ---------- figma editor ---------- */
@customElement("figma-editor")
class FigmaEditor extends LitElement {
  static styles = css`
    :host { display: block; width: 1366px; font-family: Inter, sans-serif; font-size: 11px; color: #333; }
    .top { height: 48px; background: #2c2c2c; display: flex; align-items: center; color: #e8e8e8; }
    .tool { display: flex; align-items: center; justify-content: center; gap: 5px; height: 48px; box-sizing: border-box; }
    .pad { padding-left: 7px; }
    .sel { background: #18a0fb; color: #fff; }
    .file { display: flex; align-items: center; font-size: 13px; color: #b3b3b3; margin-left: 155px; width: 613px; box-sizing: border-box; }
    .slash { width: 28px; text-align: center; padding-left: 8px; box-sizing: border-box; color: #777; }
    .doc { color: #fff; font-weight: 500; margin-right: 9px; }
    .status { display: flex; align-items: center; margin-left: -8px; }
    .av { width: 24px; height: 24px; border-radius: 50%; background: #f24e1e; color: #fff; display: grid; place-items: center; margin: 0 15px 0 13px; font-weight: 500; }
    .share { width: 54px; height: 32px; border-radius: 5px; background: #18a0fb; color: #fff; display: grid; place-items: center; font-weight: 600; margin-right: 25.500px; }
    .pct { margin: 0 5px 0 33px; }
    .body { display: flex; height: 609px; }
    .side { width: 240px; box-sizing: border-box; background: #fff; border-right: 1px solid #e5e5e5; flex: none; }
    .tabs { height: 41px; box-sizing: border-box; border-bottom: 1px solid #e5e5e5; display: flex; align-items: center; padding: 0 8px 0 16px; }
    .off { color: #b3b3b3; }
    .m { font-weight: 500; }
    .b { font-weight: 600; }
    .pages { height: 169px; box-sizing: border-box; border-bottom: 1px solid #e5e5e5; padding-top: 3px; }
    .row { height: 32px; display: flex; align-items: center; box-sizing: border-box; }
    .between { justify-content: space-between; padding: 0 19px 0 16px; }
    .page { padding-left: 16px; }
    .ic { width: 16px; display: grid; place-items: center; margin-right: 8px; }
    .layers { height: 399px; overflow: hidden; }
    .layers .row:first-child { margin-top: -17px; }
    .d0 { padding-left: 16px; } .d1 { padding-left: 40px; } .d2 { padding-left: 64px; }
    .right { width: 240px; background: #fff; flex: none; position: relative; }
    .sec { height: 81px; box-sizing: border-box; border-bottom: 1px solid #e5e5e5; padding: 8px 16px 0; }
    .tip { padding: 8px 18px 0 16px; }
    .hd { justify-content: space-between; font-weight: 600; }
    .para { display: flex; padding-top: 8px; line-height: 16px; }
    .pi { width: 24px; }
    .lines { display: flex; flex-direction: column; }
    .sw { width: 16px; height: 16px; background: #000; margin-right: 8px; }
    .help { position: absolute; right: 24px; bottom: 24px; width: 36px; height: 36px; border-radius: 50%; background: #2c2c2c; color: #fff; display: grid; place-items: center; font-size: 18px; font-weight: 300; }
    .t2 { margin-top: 16px; }
  `;
  render() {
    const c = ico(8, 6, "0 0 8 6", svg`<path d="M1 1l3 3 3-3" stroke="currentColor" stroke-width="1.200"/>`);
    const tool = (w: number, g: unknown, chev = true, cls = "") => html`<div class="tool ${cls}" style="width:${w}px">${ico(18, 22, "0 0 18 22", g)}${chev ? c : nothing}</div>`;
    const frame = ico(12, 12, "0 0 12 12", svg`<path d="M3.500 .5v11M8.500 .5v11M.5 3.500h11M.5 8.500h11" stroke="#222"/>`);
    const txt = ico(12, 12, "0 0 12 12", svg`<path d="M1 3.500v-2h10v2M6 1.500v9M4 10.500h4" stroke="#b0b0b0"/>`);
    const rect = ico(12, 12, "0 0 12 12", svg`<rect x="1.500" y="3.500" width="9" height="5" rx="1" stroke="#b0b0b0"/>`);
    const grp = ico(12, 12, "0 0 12 12", svg`<path d="M1.500 3.500v-2h2M5 1.500h2M8.500 1.500h2v2M10.500 5v2M10.500 8.500v2h-2M7 10.500H5M3.500 10.500h-2v-2M1.500 7V5" stroke="#a0a0a0"/>`);
    const X = ico(11, 11, "0 0 11 11", svg`<path d="M.5.5l10 10M10.500.5l-10 10" stroke="#333" stroke-width="1.100"/>`);
    const layers: [string, number, string, number][] = [["Frame 10", 49, "f", 0], ["Frame 9", 43, "f", 0], ["Group 6", 42, "g", 1], ["Karir", 24.5, "t", 2], ["FAQ", 21, "t", 2], ["Kontak Kami", 65, "t", 2], ["Tentang Kami", 71, "t", 2], ["Rectangle 46", 69, "r", 2], ["Rectangle 42", 69, "r", 2], ["Rectangle 45", 69, "r", 2], ["Rectangle 34", 69, "r", 2], ["Rectangle 33", 69, "r", 2], ["Frame 2", 43, "f", 0]];
    const im: Record<string, unknown> = { f: frame, g: grp, t: txt, r: rect };
    return html`
      <div class="top">
        ${tool(50, svg`<g stroke="currentColor" stroke-width="1.200"><path d="M9 3.500H6.500a2.500 2.500 0 0 0 0 5H9zM9 3.500h2.500a2.500 2.500 0 0 1 0 5H9zM9 8.500H6.500a2.500 2.500 0 0 0 0 5H9zM9 13.500H6.500A2.500 2.500 0 1 0 9 16z"/><circle cx="11.500" cy="11" r="2.500"/></g>`)}
        ${tool(48, svg`<path d="M4 4.500l12 6.500-5.500 1.500L7 18z" stroke="currentColor" stroke-width="1.200"/>`, true, "sel pad")}
        ${tool(48, svg`<path d="M4.500 3v16M13.500 3v16M1 6.500h16M1 15.500h16" stroke="currentColor" stroke-width="1.200"/>`, true, "pad")}
        ${tool(48, svg`<circle cx="9" cy="11" r="7.700" stroke="currentColor" stroke-width="1.200"/>`, true, "pad")}
        ${tool(48, svg`<path d="M2 4l9 2.500 3.500 8-3 3-8-3.500zM2 4l6 7M10.500 18.500l5-5" stroke="currentColor" stroke-width="1.200"/><circle cx="9" cy="11.500" r="1.500" stroke="currentColor"/>`, true, "pad")}
        ${tool(40, svg`<path d="M2.500 7V3.500h13V7M9 3.500v15M6 18.500h6" stroke="currentColor" stroke-width="1.200"/>`, false)}
        ${tool(40, svg`<path d="M4.500 12V5.500q1.200-1.500 2.300 0V10 3.500q1.200-1.500 2.400 0V10 3.500q1.300-1.500 2.500 0V10.500 5.500q1.300-1.500 2.500 0c.3 5 1.300 14-5 14-4.500 0-5.500-3-8-7.500 1-1.500 2.300-.5 3.300 1.500" stroke="currentColor" stroke-width="1.100"/>`, false)}
        ${tool(40, svg`<path d="M1.500 19c1-1 1.300-2.500.8-3.500A7.700 7.700 0 1 1 9.500 19z" stroke="currentColor" stroke-width="1.200"/>`, false)}
        <div class="file">${fit("Praktikum Figma UI & ...", 155)}<span class="slash">/</span>${fit("Pluang_Figma Praktikum", 161, "doc")}${c}</div>
        <div class="status">
          ${ico(20, 20, "0 0 20 20", svg`<path d="M2 14V10a8 8 0 0 1 16 0v4M2 12.500h2.500v6H2zM15.500 12.500H18v6h-2.500z" stroke="currentColor" stroke-width="1.100"/>`)}
          <div class="av">R</div><div class="share">${fit("Share", 30.5)}</div>
          ${ico(11, 14, "0 0 11 14", svg`<path d="M1 1.500v11L9.500 7z" stroke="currentColor" stroke-width="1.200"/>`)}
          <span class="pct">${fit("37%", 21)}</span>${c}
        </div>
      </div>
      <div class="body">
        <div class="side">
          <div class="tabs">${fit("Layers", 35, "b")}<span style="width:16px"></span>${fit("Assets", 35, "off m")}<span style="width:33px"></span>${fit("Tentang Kami ...", 82)}<span style="width:7px"></span>${ico(8, 6, "0 0 8 6", svg`<path d="M1 4.500l3-3 3 3" stroke="#888"/>`)}</div>
          <div class="pages">
            <div class="row between">${fit("Pages", 32.5, "b")}${ico(11, 11, "0 0 11 11", svg`<path d="M5.500 0v11M0 5.500h11" stroke="#222"/>`)}</div>
            ${[["Homepage", 56], ["Tentang Kami Page", 101], ["Kontak Kami Page", 93.5]].map(([t, w], i) => html`<div class="row page"><span class="ic">${i === 1 ? ico(9, 7, "0 0 9 7", svg`<path d="M1 3l2.500 2.500L8 1" stroke="#000" stroke-width="1.800"/>`) : nothing}</span>${fit(t as string, w as number)}</div>`)}
          </div>
          <div class="layers">${layers.map(([t, w, k, d]) => html`<div class="row d${d}"><span class="ic">${im[k as string]}</span>${fit(t, w, k === "f" ? "b" : "")}</div>`)}</div>
        </div>
        <proto-canvas></proto-canvas>
        <div class="right">
          <div class="tabs">${fit("Design", 36, "off m")}<span style="width:17px"></span>${fit("Prototype", 52, "b")}<span style="width:15.500px"></span>${fit("Inspect", 39, "off m")}</div>
          <div class="sec"><div class="row b">${fit("Device", 36)}</div><div class="row">${fit("Presentation", 65.5)}<span style="width:6px"></span><span class="off">${c}</span></div></div>
          <div class="sec"><div class="row b">${fit("Background", 63.5)}</div><div class="row"><span class="sw"></span>${fit("000000", 41)}</div></div>
          <div class="sec"><div class="row b">${fit("Flows", 31)}</div><div class="row">${fit("Flow 1", 32)}</div></div>
          <div class="tip">
            <div class="row hd">${fit("Removing a connection", 124)}${X}</div>
            <div class="para"><span class="pi">${ico(20, 16, "0 0 20 16", svg`<path d="M1 .7h7.500v5M8.500 9.500v5.800H1M12.500 5l5 5M17.500 5l-5 5" stroke="#222" stroke-width="1.200"/><circle cx="8.500" cy="7.600" r="1.800" stroke="#222"/>`)}</span><div class="lines">${fit("To delete a connection, click", 148)}${fit("and drag on either end.", 121)}</div></div>
            <div class="row hd t2">${fit("Running your prototype", 125)}${X}</div>
            <div class="para"><span class="pi">${ico(16, 16, "0 0 16 16", svg`<path d="M5.500 3v10l8-5z" stroke="#222" stroke-width="1.200"/>`)}</span><div class="lines">${fit("Use the play button in the", 134)}${fit("toolbar to play your prototype.", 158)}${fit("If there are no connections, the", 162.5)}${fit("play button can be used to play", 163)}${fit("a presentation of your frames.", 156)}</div></div>
          </div>
          <div class="help">?</div>
        </div>
      </div>`;
  }
}

@customElement("app-root")
class AppRoot extends LitElement {
  static styles = css`
    :host { display: flex; width: 2726px; height: 768px; background: #000; overflow: hidden; }
    .win { display: flex; flex-direction: column; flex: none; height: 768px; }
    .l { width: 1366px; }
    .r { width: 1360px; }
    .stage { height: 657px; box-sizing: border-box; background: #000; padding: 60px 0 0 301.500px; }
  `;
  render() {
    const L: Tab[] = [{ i: "whatsapp", t: "(4) What" }, { i: "materi", t: "Materi -" }, { i: "figma", t: "Plua", active: true }, { i: "google", t: "spotify" }, { i: "github", t: "KyloRen" }, { i: "github", t: "mrpond" }, { i: "globe", t: "Downlo" }, { i: "google", t: "semboy" }, { i: "keep", t: "Google" }, { i: "google", t: "cara fre" }, { i: "pluang", t: "Hubung" }, { i: "camera", t: "Pluang" }, { i: "camera", t: "Hubung" }, { i: "camera", t: "Tentang" }];
    const R: Tab[] = [{ i: "pluang", t: "Hubu" }, { i: "pluang", t: "Tenta" }, { i: "figma", t: "▶ Pa" }, { i: "figma", t: "▶ Pa", active: true }, { i: "figma", t: "▶ Pa" }, { i: "camera", t: "Tenta" }, { i: "materi", t: "Prakt" }, { i: "insta", t: "Insta" }, { i: "google", t: "pnm" }, { i: "google", t: "tinde" }, { i: "gmail", t: "Let's" }, { i: "slides", t: "Stand" }];
    return html`
      <div class="win l">
        <browser-chrome dim .tabs=${L} url="figma.com/file/xitLpMarhi1SLyJHQ6CO8e/Pluang_Figma-Praktikum?node-id=46%3A664" .urlWidth=${543}></browser-chrome>
        <figma-editor></figma-editor>
        <task-bar tray></task-bar>
      </div>
      <div class="win r">
        <browser-chrome closable .tabWidth=${90.15} .tabs=${R} url="figma.com/proto/xitLpMarhi1SLyJHQ6CO8e/Pluang_Figma-Praktikum?node-id=46%3A734&scaling=contain&page-id=46%3A664&starting-..." .urlWidth=${876}></browser-chrome>
        <div class="stage"><pluang-page></pluang-page></div>
        <task-bar></task-bar>
      </div>`;
  }
}
